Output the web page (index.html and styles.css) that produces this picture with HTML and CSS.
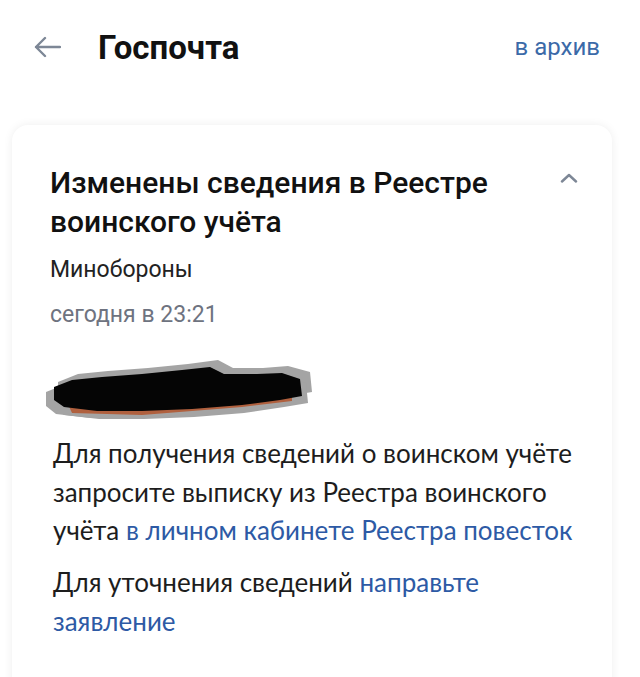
FILE: index.html
```html
<!DOCTYPE html>
<html>
	<head>
		<title>Госпочта</title>
		<link rel="stylesheet" href="styles.css">
	</head>
	<body>
		<header class="top-bar">
			<div class="top-left">
				<svg class="back-icon" width="28" height="22" viewBox="0 0 28 22">
					<path d="M27 11H3M12 2L3 11L12 20" fill="none" stroke="#7d8796" stroke-width="2.4" stroke-linecap="round" stroke-linejoin="round" />
				</svg>
				<h1 class="page-title">Госпочта</h1>
			</div>
			<a class="archive-link">в архив</a>
		</header>

		<div class="card">
			<div class="card-head">
				<h2 class="card-title">Изменены сведения в Реестре воинского учёта</h2>
				<svg class="chevron" width="18" height="10" viewBox="0 0 18 10">
					<path d="M2 8.5L9 2L16 8.5" fill="none" stroke="#7d8796" stroke-width="2.4" stroke-linecap="round" stroke-linejoin="round" />
				</svg>
			</div>
			<div class="sender">Минобороны</div>
			<div class="date">сегодня в 23:21</div>

			<!-- закрашенная строка -->
			<svg class="scribble" width="272" height="66" viewBox="0 0 272 66">
				<g fill="#5a5a5a" opacity="0.55">
					<path transform="translate(-6 5)" d="M10 32L30 24L60 21L100 18L140 14L170 10L185 18L215 18L240 16L262 22L264 42L240 46L200 52L150 56L100 58L55 58L20 54L10 46Z" />
					<path transform="translate(6 -5)" d="M10 32L30 24L60 21L100 18L140 14L170 10L185 18L215 18L240 16L262 22L264 42L240 46L200 52L150 56L100 58L55 58L20 54L10 46Z" />
					<path transform="translate(2 6)" d="M10 32L30 24L60 21L100 18L140 14L170 10L185 18L215 18L240 16L262 22L264 42L240 46L200 52L150 56L100 58L55 58L20 54L10 46Z" />
				</g>
				<path transform="translate(0 2)" d="M20 34L60 26L140 18L220 20L250 28L250 44L200 50L100 58L30 56Z" fill="#b0603e" />
				<path d="M12 32L30 25L60 22L100 19L140 15L168 12L182 19L215 19L240 18L258 24L260 41L238 45L200 50L150 54L100 56L55 56L22 52L12 45Z" fill="#050505" />
			</svg>

			<div class="message-body">
				<p>Для получения сведений о воинском учёте запросите выписку из Реестра воинского учёта <a>в личном кабинете Реестра повесток</a></p>
				<p>Для уточнения сведений <a>направьте заявление</a></p>
			</div>
		</div>
	</body>
</html>
```

FILE: styles.css
```css
body {
	margin: 0;
	background-color: #fff;
	font-family: Roboto, "Liberation Sans", sans-serif;
	color: #1a1a1a;
	overflow: hidden;
}

.top-bar {
	display: flex;
	justify-content: space-between;
	align-items: center;
	height: 94px;
	padding: 0 40px 0 33px;
}

.top-left {
	display: flex;
	align-items: center;
	gap: 37px;
}

.back-icon {
	display: block;
}

.page-title {
	margin: 0;
	font-size: 33px;
	font-weight: 700;
	color: #111;
}

.archive-link {
	font-size: 24px;
	color: #3b6aa8;
}

.card {
	margin: 31px 28px 0 12px;
	padding: 38px 30px 40px 38px;
	background-color: #fff;
	border-radius: 16px;
	box-shadow: 0 0 10px rgba(0, 0, 0, 0.07);
	height: 600px;
}

.card-head {
	display: flex;
	justify-content: space-between;
	align-items: flex-start;
}

.card-title {
	margin: 0;
	max-width: 470px;
	font-size: 30px;
	font-weight: 500;
	line-height: 39px;
	color: #111;
}

.chevron {
	margin-top: 10px;
	margin-right: 4px;
}

.sender {
	margin-top: 14px;
	font-size: 23px;
	line-height: 30px;
	color: #222;
}

.date {
	margin-top: 15px;
	font-size: 23px;
	line-height: 30px;
	color: #6e7380;
}

.scribble {
	display: block;
	margin: 25px 0 0 -8px;
}

.message-body {
	margin-top: 13px;
	padding-left: 3px;
	font-family: Lato, "Noto Sans", sans-serif;
	font-size: 26px;
	line-height: 38.5px;
	color: #1d1d1d;
}

.message-body p {
	margin: 0 0 13.5px;
}

.message-body a {
	color: #2d5aa5;
}
```
